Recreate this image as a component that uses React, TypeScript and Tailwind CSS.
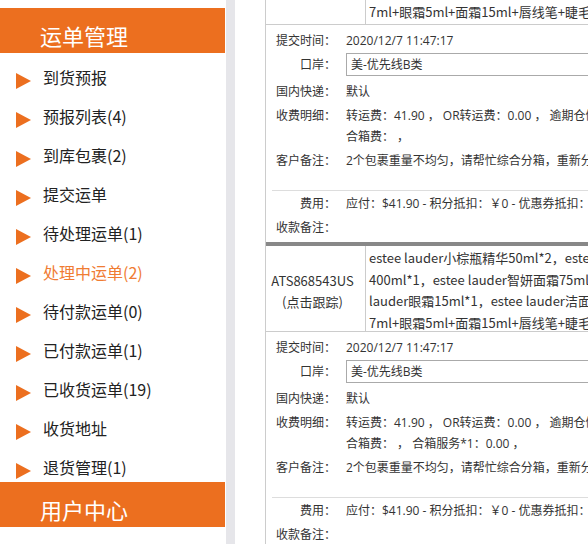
import React from "react";

const menu = [
  "到货预报",
  "预报列表(4)",
  "到库包裹(2)",
  "提交运单",
  "待处理运单(1)",
  "处理中运单(2)",
  "待付款运单(0)",
  "已付款运单(1)",
  "已收货运单(19)",
  "收货地址",
  "退货管理(1)",
];

function MenuItem({ label, active }: { label: string; active?: boolean }) {
  return (
    <div className="flex h-[39px] items-start">
      <span className="ml-[16px] mt-[20px] h-0 w-0 border-y-[8px] border-l-[15px] border-y-transparent border-l-[#ec6f1f]" />
      <span
        className={
          "ml-[12px] mt-[14px] text-[16px] leading-[20px] " +
          (active ? "text-[#f07c33]" : "text-[#222]")
        }
      >
        {label}
      </span>
    </div>
  );
}

function Row({ label, children, className }: { label: string; children?: React.ReactNode; className?: string }) {
  return (
    <div className={"flex " + (className ?? "")}>
      <div className="w-[70px] shrink-0 text-right">{label}</div>
      <div className="ml-[10px] whitespace-nowrap">{children}</div>
    </div>
  );
}

function Detail({ feeLine2 }: { feeLine2: string }) {
  return (
    <div className="pt-[3px] pb-[3px] font-['Open_Sans','Noto_Sans_CJK_SC',sans-serif] text-[12px] leading-[21px]">
      <Row label="提交时间：" className="h-[24px] items-center">
        2020/12/7 11:47:17
      </Row>
      {/* 口岸 */}
      <div className="flex h-[27px] items-start">
        <div className="mt-[1px] w-[70px] shrink-0 text-right leading-[23px]">口岸：</div>
        <div className="ml-[10px] mt-[1px] h-[23px] w-[400px] border border-[#aaa] pl-[4px] leading-[21px]">
          美-优先线B类
        </div>
      </div>
      <Row label="国内快递：" className="h-[24px] items-center">
        默认
      </Row>
      <Row label="收费明细：" className="h-[45px] py-[1.5px]">
        <div>转运费：41.90 ， OR转运费：0.00 ， 逾期仓储费：0.00 ，</div>
        <div>{feeLine2}</div>
      </Row>
      <Row label="客户备注：" className="h-[42px] pt-[1.5px]">
        2个包裹重量不均匀，请帮忙综合分箱，重新分配重量
      </Row>
      <div className="ml-[6px] border-t border-[#ddd]">
        <div className="-ml-[6px]">
          <Row label="费用：" className="h-[24px] items-center">
            应付：$41.90 - 积分抵扣：￥0 - 优惠券抵扣：￥0
          </Row>
          <Row label="收款备注：" className="h-[24px] items-center" />
        </div>
      </div>
    </div>
  );
}

export default function App() {
  return (
    <div className="flex h-[544px] w-[588px] overflow-hidden bg-white font-['Noto_Sans_CJK_SC','Noto_Sans',sans-serif]">
      {/* sidebar */}
      <div className="w-[225px] shrink-0 bg-white">
        <div className="h-[8px]" />
        <div className="h-[45px] bg-[#ec6f1f] pl-[40px] pt-[12px] text-[22px] leading-[30px] text-white">
          运单管理
        </div>
        {menu.map((m) => (
          <MenuItem key={m} label={m} active={m === "处理中运单(2)"} />
        ))}
        <div className="h-[45px] bg-[#ec6f1f] pl-[40px] pt-[12px] text-[22px] leading-[30px] text-white">
          用户中心
        </div>
        <MenuItem label="个人信息" />
      </div>
      <div className="w-[10px] shrink-0 border-l border-white bg-[#e6e6ea]" />

      {/* main */}
      <div className="flex-1 overflow-hidden bg-white pl-[30px]">
        <div className="w-[900px] border-l border-[#ccc] text-[13px] text-[#333]">
          {/* tail of previous order row */}
          <div className="flex h-[25px] border-b border-[#ccc]">
            <div className="w-[100px] shrink-0 border-r border-[#ccc]" />
            <div className="whitespace-nowrap pl-[3px] pt-[1px] leading-[21.7px]">
              7ml+眼霜5ml+面霜15ml+唇线笔+睫毛膏
            </div>
          </div>
          <Detail feeLine2="合箱费： ，" />
          <div className="h-[4px] bg-[#888]" />

          <div className="flex h-[86px] border-b border-[#ccc]">
            <div className="flex w-[100px] shrink-0 flex-col items-center justify-center border-r border-[#ccc] pr-[6px] pt-[5px] leading-[21px]">
              <div>ATS868543US</div>
              <div>(点击跟踪)</div>
            </div>
            <div className="whitespace-nowrap pl-[3px] pt-[1px] leading-[21.7px]">
              <div>estee lauder小棕瓶精华50ml*2，estee lauder红石榴水</div>
              <div>400ml*1，estee lauder智妍面霜75ml*1，estee</div>
              <div>lauder眼霜15ml*1，estee lauder洁面30ml，</div>
              <div>7ml+眼霜5ml+面霜15ml+唇线笔+睫毛膏</div>
            </div>
          </div>
          <Detail feeLine2="合箱费： ， 合箱服务*1：0.00 ，" />
        </div>
      </div>
    </div>
  );
}
